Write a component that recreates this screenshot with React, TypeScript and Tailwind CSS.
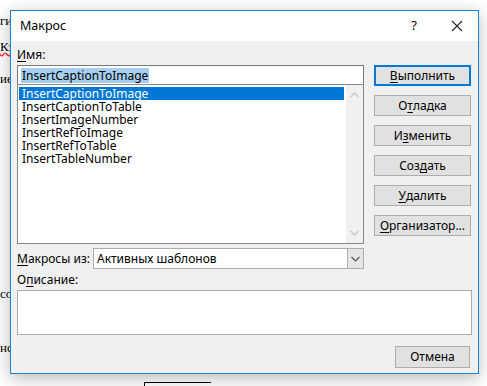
import React from "react";

const font = { fontFamily: '"Noto Sans", "Segoe UI", sans-serif' };

function U({ children }: { children: React.ReactNode }) {
  return <span className="underline underline-offset-2 decoration-1">{children}</span>;
}

function Btn({ children, primary }: { children: React.ReactNode; primary?: boolean }) {
  return (
    <div
      className={
        "h-[21px] w-[97px] flex items-center justify-center bg-[#e1e1e1] text-[12px] text-black " +
        (primary ? "border-2 border-[#0078d7]" : "border border-[#adadad]")
      }
    >
      {children}
    </div>
  );
}

const macros = [
  "InsertCaptionToImage",
  "InsertCaptionToTable",
  "InsertImageNumber",
  "InsertRefToImage",
  "InsertRefToTable",
  "InsertTableNumber",
];

function Chevron({ up, color }: { up?: boolean; color: string }) {
  return (
    <svg width="9" height="6" viewBox="0 0 9 6">
      <path
        d={up ? "M0.5 5 L4.5 1 L8.5 5" : "M0.5 1 L4.5 5 L8.5 1"}
        fill="none"
        stroke={color}
        strokeWidth="1.2"
      />
    </svg>
  );
}

export default function App() {
  return (
    <div className="relative w-[487px] h-[386px] bg-white overflow-hidden" style={font}>
      {/* document behind the dialog */}
      <div className="absolute left-0 top-[11px] text-[13px] text-black" style={{ fontFamily: '"Liberation Serif", serif' }}>ги</div>
      <div className="absolute left-0 top-[37px] text-[13px] text-black" style={{ fontFamily: '"Liberation Serif", serif' }}>
        <span className="underline decoration-wavy decoration-red-500">Кэ</span>
      </div>
      <div className="absolute left-0 top-[69px] text-[13px] text-black" style={{ fontFamily: '"Liberation Serif", serif' }}>ие</div>
      <div className="absolute left-0 top-[284px] text-[13px] text-black" style={{ fontFamily: '"Liberation Serif", serif' }}>со</div>
      <div className="absolute left-0 top-[338px] text-[13px] text-black" style={{ fontFamily: '"Liberation Serif", serif' }}>нс</div>
      <div className="absolute left-[144px] top-[382px] w-[67px] h-[6px] border-t border-l border-black" />

      {/* dialog window */}
      <div className="absolute left-[10px] top-[10px] w-[469px] h-[364px] border border-[#1883d7] bg-[#f0f0f0] shadow-[0_4px_16px_rgba(0,0,0,0.28)] flex flex-col">
        <div className="h-[30px] bg-white flex items-center pl-[9px] pr-[15px] text-[12.5px] text-black">
          <span className="flex-1">Макрос</span>
          <span className="mr-[34px] text-[13px]">?</span>
          <svg width="12" height="12" viewBox="0 0 12 12">
            <path d="M1 1 L11 11 M11 1 L1 11" stroke="#222" strokeWidth="1.1" />
          </svg>
        </div>

        <div className="flex-1 flex flex-col pl-[6px] pr-[7px] text-[12px] text-black">
          <div className="flex">
            <div className="w-[347px] flex flex-col">
              <div className="mt-[6px] h-[16px] leading-[16px]">
                <U>И</U>мя:
              </div>
              <div className="mt-[2px] h-[19px] bg-white border border-[#7a7a7a] border-b-0 flex items-center pl-[3px]">
                <span className="bg-[#a6cef0] leading-[15px] px-[1px]">InsertCaptionToImage</span>
              </div>
              <div className="h-[160px] bg-white border border-[#828790] flex">
                <div className="flex-1 pt-[2px] pl-[1px]">
                  {macros.map((m, i) => (
                    <div
                      key={m}
                      className={
                        "h-[13px] leading-[13px] pl-[3px] " +
                        (i === 0 ? "bg-[#0078d7] text-white mr-[2px]" : "")
                      }
                    >
                      {m}
                    </div>
                  ))}
                </div>
                <div className="w-[17px] bg-[#f0f0f0] flex flex-col items-center justify-between py-[7px]">
                  <Chevron up color="#c5c5c5" />
                  <Chevron color="#c5c5c5" />
                </div>
              </div>
            </div>
            <div className="ml-[10px] mt-[24px] flex flex-col gap-[9px]">
              <Btn primary>
                <U>В</U>ыполнить
              </Btn>
              <Btn>
                О<U>т</U>ладка
              </Btn>
              <Btn>
                И<U>з</U>менить
              </Btn>
              <Btn>
                Соз<U>д</U>ать
              </Btn>
              <Btn>
                <U>У</U>далить
              </Btn>
              <Btn>
                <U>О</U>рганизатор...
              </Btn>
            </div>
          </div>

          <div className="mt-[4px] flex items-center">
            <div className="w-[76px]">
              <U>М</U>акросы из:
            </div>
            <div className="w-[271px] h-[21px] bg-white border border-[#adadad] flex">
              <div className="flex-1 pl-[3px] leading-[19px]">Активных шаблонов</div>
              <div className="w-[16px] bg-[#e5e5e5] border-l border-[#adadad] flex items-center justify-center">
                <Chevron color="#555" />
              </div>
            </div>
          </div>

          <div className="mt-[3px] h-[16px] leading-[16px]">
            О<U>п</U>исание:
          </div>
          <div className="mt-[2px] w-[455px] h-[45px] bg-white border border-[#adadad]" />

          <div className="mt-[11px] flex justify-end pr-[1px]">
            <div className="h-[22px] w-[75px] flex items-center justify-center bg-[#e1e1e1] border border-[#adadad]">
              Отмена
            </div>
          </div>
        </div>
      </div>
    </div>
  );
}
